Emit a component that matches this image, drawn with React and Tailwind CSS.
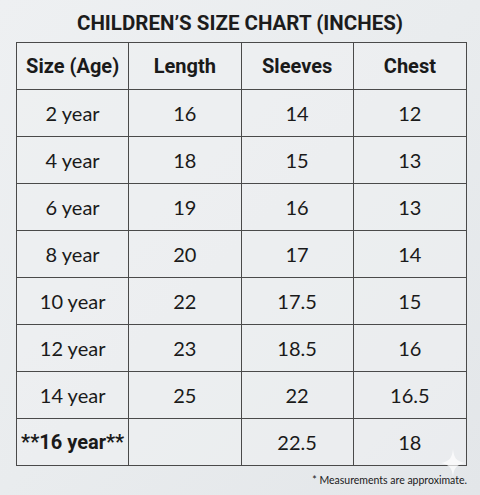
const rows = [
  ['2 year', '16', '14', '12'],
  ['4 year', '18', '15', '13'],
  ['6 year', '19', '16', '13'],
  ['8 year', '20', '17', '14'],
  ['10 year', '22', '17.5', '15'],
  ['12 year', '23', '18.5', '16'],
  ['14 year', '25', '22', '16.5'],
]

const headers = ['Size (Age)', 'Length', 'Sleeves', 'Chest']

function Cell({ children, bold, last }) {
  return (
    <div
      className={`flex h-[47px] items-center justify-center border-b border-[#4a4a4a] ${last ? '' : 'border-r'} ${
        bold ? 'font-["Roboto",sans-serif] text-[20px] font-bold' : 'font-["Lato",sans-serif] text-[20px]'
      } text-[#1a1a1a]`}
    >
      {children}
    </div>
  )
}

export default function App() {
  return (
    <div className="relative h-[495px] w-[480px] overflow-hidden bg-gradient-to-br from-[#eef0f2] via-[#e9ecee] to-[#e3e6e9]">
      <h1 className='pt-[9px] text-center font-["Roboto",sans-serif] text-[20.5px] font-bold leading-[28px] text-[#1c1c1c]'>
        CHILDREN’S SIZE CHART (INCHES)
      </h1>

      <div className="ml-[16px] mt-[5px] grid w-[451px] grid-cols-4 border-l border-t border-r border-[#4a4a4a] bg-[#eef0f2]/60">
        {headers.map((label, i) => (
          <Cell key={label} bold last={i === 3}>
            {label}
          </Cell>
        ))}
        {rows.map((row) =>
          row.map((value, i) => (
            <Cell key={`${row[0]}-${i}`} last={i === 3}>
              {value}
            </Cell>
          ))
        )}
        <Cell bold>**16 year**</Cell>
        <Cell />
        <Cell>22.5</Cell>
        <Cell last>18</Cell>
      </div>

      <p className='mr-[13px] mt-[7px] text-right font-["Lato",sans-serif] text-[10.5px] text-[#1a1a1a]'>
        * Measurements are approximate.
      </p>

      <svg className="absolute left-[441px] top-[449px]" width="24" height="28" viewBox="0 0 24 28">
        <path d="M12 0 C13 9 15 12 24 14 C15 16 13 19 12 28 C11 19 9 16 0 14 C9 12 11 9 12 0 Z" fill="#ffffff" opacity="0.7" />
      </svg>
    </div>
  )
}
